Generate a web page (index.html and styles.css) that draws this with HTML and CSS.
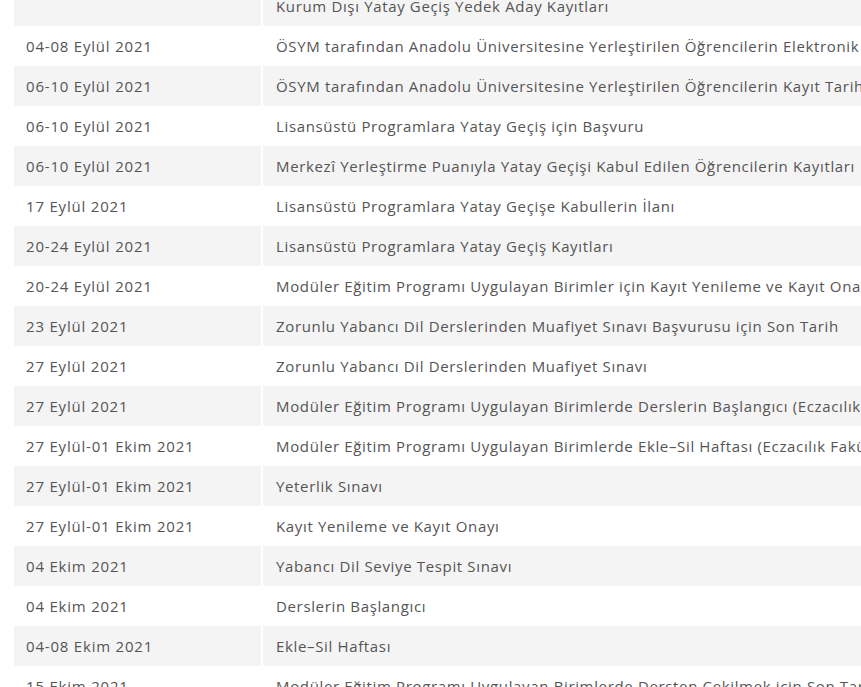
FILE: index.html
```html
<!DOCTYPE html>
<html lang="tr">
<head>
<meta charset="utf-8">
<link rel="stylesheet" href="styles.css">
</head>
<body>
<div class="wrap">
<table class="cal">
<tbody>
<tr><td class="date"></td><td class="ev">Kurum Dışı Yatay Geçiş Yedek Aday Kayıtları</td></tr>
<tr><td class="date">04-08 Eylül 2021</td><td class="ev">ÖSYM tarafından Anadolu Üniversitesine Yerleştirilen Öğrencilerin Elektronik Kayıtları</td></tr>
<tr><td class="date">06-10 Eylül 2021</td><td class="ev">ÖSYM tarafından Anadolu Üniversitesine Yerleştirilen Öğrencilerin Kayıt Tarihleri</td></tr>
<tr><td class="date">06-10 Eylül 2021</td><td class="ev">Lisansüstü Programlara Yatay Geçiş için Başvuru</td></tr>
<tr><td class="date">06-10 Eylül 2021</td><td class="ev">Merkezî Yerleştirme Puanıyla Yatay Geçişi Kabul Edilen Öğrencilerin Kayıtları</td></tr>
<tr><td class="date">17 Eylül 2021</td><td class="ev">Lisansüstü Programlara Yatay Geçişe Kabullerin İlanı</td></tr>
<tr><td class="date">20-24 Eylül 2021</td><td class="ev">Lisansüstü Programlara Yatay Geçiş Kayıtları</td></tr>
<tr><td class="date">20-24 Eylül 2021</td><td class="ev">Modüler Eğitim Programı Uygulayan Birimler için Kayıt Yenileme ve Kayıt Onayı</td></tr>
<tr><td class="date">23 Eylül 2021</td><td class="ev">Zorunlu Yabancı Dil Derslerinden Muafiyet Sınavı Başvurusu için Son Tarih</td></tr>
<tr><td class="date">27 Eylül 2021</td><td class="ev">Zorunlu Yabancı Dil Derslerinden Muafiyet Sınavı</td></tr>
<tr><td class="date">27 Eylül 2021</td><td class="ev">Modüler Eğitim Programı Uygulayan Birimlerde Derslerin Başlangıcı (Eczacılık Fakültesi)</td></tr>
<tr><td class="date">27 Eylül-01 Ekim 2021</td><td class="ev">Modüler Eğitim Programı Uygulayan Birimlerde Ekle–Sil Haftası (Eczacılık Fakültesi)</td></tr>
<tr><td class="date">27 Eylül-01 Ekim 2021</td><td class="ev">Yeterlik Sınavı</td></tr>
<tr><td class="date">27 Eylül-01 Ekim 2021</td><td class="ev">Kayıt Yenileme ve Kayıt Onayı</td></tr>
<tr><td class="date">04 Ekim 2021</td><td class="ev">Yabancı Dil Seviye Tespit Sınavı</td></tr>
<tr><td class="date">04 Ekim 2021</td><td class="ev">Derslerin Başlangıcı</td></tr>
<tr><td class="date">04-08 Ekim 2021</td><td class="ev">Ekle–Sil Haftası</td></tr>
<tr><td class="date">15 Ekim 2021</td><td class="ev">Modüler Eğitim Programı Uygulayan Birimlerde Dersten Çekilmek için Son Tarih</td></tr>
</tbody>
</table>
</div>
</body>
</html>
```

FILE: styles.css
```css
html, body {
  margin: 0;
  padding: 0;
  background: #fff;
  overflow: hidden;
}
.wrap {
  padding-left: 12px;
  margin-top: -14px;
  width: 1600px;
}
.cal {
  border-collapse: separate;
  border-spacing: 2px 0;
  font-family: "Open Sans", sans-serif;
  font-size: 15px;
  color: #555;
}
.cal td {
  height: 40px;
  padding: 0 0 1px 0;
  vertical-align: middle;
  white-space: nowrap;
  box-sizing: border-box;
}
.cal tr:nth-child(odd) td {
  background: #f4f4f4;
}
.cal .date {
  width: 247px;
  padding-left: 12px;
  letter-spacing: 0.8px;
}
.cal .ev {
  padding-left: 13px;
  padding-right: 20px;
  letter-spacing: 0.65px;
}
```
